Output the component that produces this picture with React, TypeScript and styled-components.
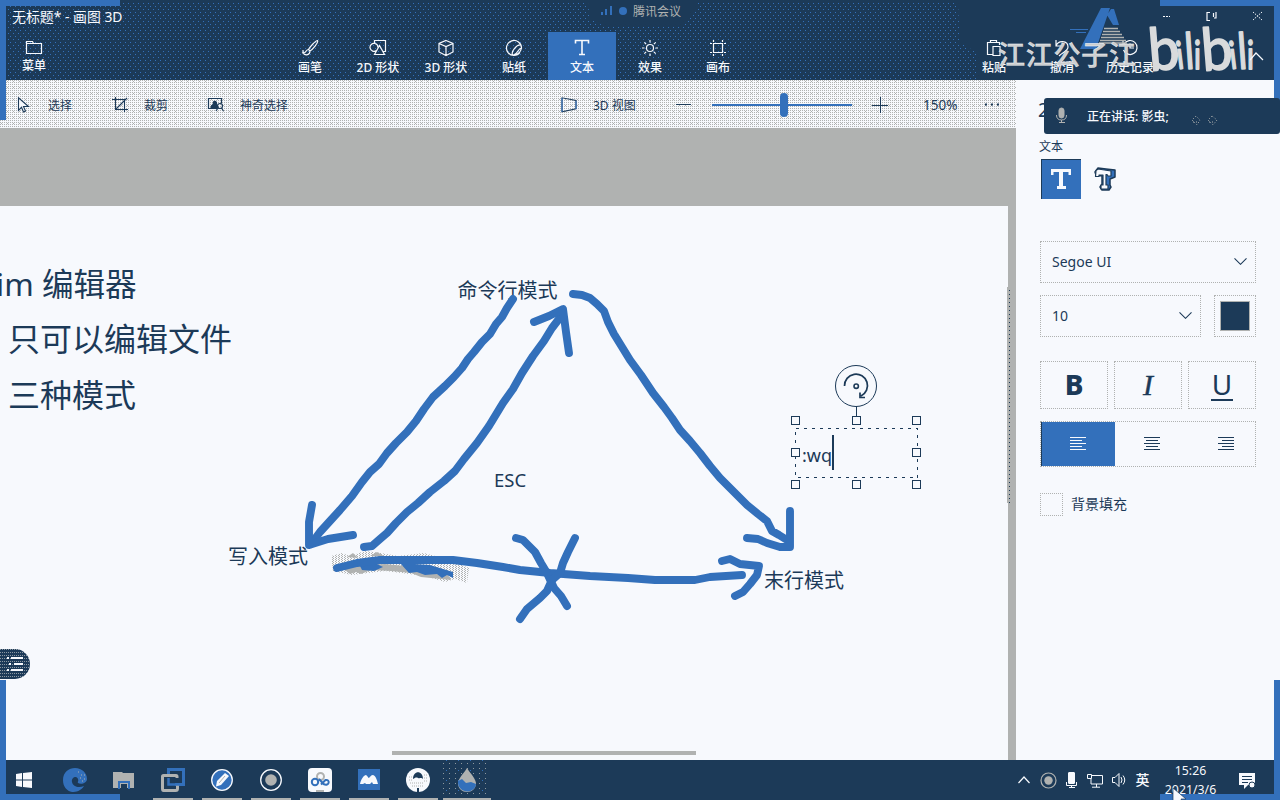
import React from 'react';
import styled, { createGlobalStyle, css } from 'styled-components';

const navy = '#1c3a58';
const blue = '#3370bb';
const gray = '#b0b2b1';
const paper = '#f7f9fd';

const Global = createGlobalStyle`
  * { box-sizing: border-box; }
  body { margin: 0; background: ${paper}; overflow: hidden; }
  svg { display: block; flex: none; }
`;

const Page = styled.div`
  position: relative;
  width: 1280px;
  height: 800px;
  overflow: hidden;
  display: grid;
  grid-template-rows: 80px 680px 40px;
  color: ${navy};
  background: ${paper};
  font-family: 'Noto Sans', 'Noto Sans CJK SC', sans-serif;
  font-size: 12px;
`;

const Header = styled.header`
  position: relative;
  display: grid;
  grid-template-rows: 32px 48px;
  background: ${navy};
  color: ${paper};
`;

const Dots = styled.div`
  position: absolute;
  inset: 3px auto 0 8px;
  width: 970px;
  background:
    conic-gradient(at 1px 1px, transparent 75%, ${blue} 0) 0 0 / 5px 6px,
    conic-gradient(at 1px 1px, transparent 75%, ${blue} 0) 2px 3px / 5px 6px;
  clip-path: polygon(0 0, 580px 0, 582px 16px, 596px 23px, 675px 23px, 686px 10px, 690px 0, 950px 0, 952px 40px, 970px 50px, 970px 100%, 0 100%);
`;

const TitleRow = styled.div`
  position: relative;
  display: flex;
  align-items: center;
  padding: 0 0 0 12px;
  font-size: 13.9px;
`;

const Meeting = styled.div`
  position: absolute;
  left: 601px;
  top: 2px;
  height: 18px;
  display: flex;
  align-items: center;
  gap: 6px;
  color: ${gray};
  font-size: 12px;
`;

const WindowButtons = styled.div`
  margin-left: auto;
  display: flex;
  padding-right: 17px;
  gap: 35px;
`;

const Tabs = styled.div`
  position: relative;
  display: flex;
`;

const Tab = styled.div<{ $active?: boolean; $before?: number; $raise?: number }>`
  width: 68px;
  margin-left: ${(p) => p.$before ?? 0}px;
  padding-top: 7px;
  display: flex;
  flex-direction: column;
  align-items: center;
  gap: ${(p) => 2 - (p.$raise ?? 0)}px;
  line-height: 18px;
  font-weight: 500;
  white-space: nowrap;
  background: ${(p) => (p.$active ? blue : 'transparent')};
`;

const Body = styled.main`
  display: grid;
  grid-template-columns: 1016px 264px;
`;

const Workspace = styled.section`
  display: grid;
  grid-template-rows: 48px 632px;
`;

const Toolbar = styled.div`
  display: flex;
  align-items: center;
  padding-top: 1px;
  background:
    conic-gradient(at 1px 1px, transparent 75%, ${gray} 0) 0 0 / 2px 2px,
    conic-gradient(at 1px 1px, transparent 75%, ${gray} 0) 1px 1px / 6px 6px,
    ${paper};
`;

const Tool = styled.div<{ $w: number }>`
  width: ${(p) => p.$w}px;
  display: flex;
  align-items: center;
  gap: 16px;
`;

const Zoom = styled.span`
  width: 62px;
  font-size: 13.5px;
`;

const Slider = styled.div`
  width: 140px;
  height: 24px;
  margin-right: 20px;
  padding-left: 68px;
  background: linear-gradient(${blue}, ${blue}) 0 11px / 100% 2px no-repeat;
`;

const Thumb = styled.div`
  width: 8px;
  height: 24px;
  border-radius: 4px;
  background: ${blue};
`;

const Canvas = styled.div`
  position: relative;
  overflow: hidden;
  padding: 78px 8px 0 0;
  background: ${gray};
`;

const Paper = styled.div`
  height: 100%;
  background: ${paper};
`;

const Drawing = styled.svg`
  position: absolute;
  left: 0;
  top: 0;
`;

const Note = styled.div<{ $x: number; $y: number; $size: number }>`
  position: absolute;
  left: ${(p) => p.$x}px;
  top: ${(p) => p.$y - 128}px;
  font-size: ${(p) => p.$size}px;
  line-height: 1;
  white-space: pre;
`;

const ScrollThumb = styled.div<{ $vertical?: boolean }>`
  position: absolute;
  background: ${gray};
  ${(p) =>
    p.$vertical
      ? css`
          left: 1007px;
          top: 159px;
          width: 4px;
          height: 216px;
          background: linear-gradient(to right, transparent 2px, ${navy} 2px, ${navy} 3px, transparent 3px), ${gray};
          &::after {
            content: '';
            position: absolute;
            inset: 0;
            background: repeating-linear-gradient(${gray} 0 3px, transparent 3px 4px);
          }
        `
      : css`
          left: 392px;
          top: 623px;
          width: 304px;
          height: 4px;
        `}
`;

const SidePill = styled.div`
  position: absolute;
  left: 0;
  top: 649px;
  width: 30px;
  height: 30px;
  display: grid;
  place-items: center;
  padding-right: 2px;
  border-radius: 0 15px 15px 0;
  background:
    conic-gradient(at 1px 1px, transparent 75%, #8b98a2 0) 0 0 / 2px 3px,
    ${navy};
`;

const Panel = styled.aside`
  position: relative;
  padding: 58px 24px 0 24px;
  background: ${paper};
`;

const PanelTitle = styled.div`
  position: absolute;
  left: 22px;
  top: 18px;
  font-size: 19px;
  line-height: 24px;
`;

const PanelLabel = styled.div`
  height: 21px;
  margin-left: -1px;
  line-height: 18px;
`;

const TypeRow = styled.div`
  display: flex;
  height: 82px;
  gap: 4px;
  padding-left: 1px;
`;

const TypeButton = styled.div<{ $active?: boolean }>`
  width: 40px;
  height: 40px;
  display: grid;
  place-items: center;
  background: ${(p) => (p.$active ? blue : 'transparent')};
  box-shadow: ${(p) => (p.$active ? `inset 1px 1px ${navy}` : 'none')};
`;

const Row = styled.div<{ $gap: number; $after: number }>`
  display: flex;
  gap: ${(p) => p.$gap}px;
  margin-bottom: ${(p) => p.$after}px;
`;

const Box = styled.div<{ $h: number; $w?: number }>`
  flex: ${(p) => (p.$w ? 'none' : 1)};
  width: ${(p) => (p.$w ? `${p.$w}px` : 'auto')};
  height: ${(p) => p.$h}px;
  display: flex;
  align-items: center;
  justify-content: center;
  border: 1px dotted ${gray};
`;

const Select = styled(Box)`
  justify-content: space-between;
  padding: 0 8px 2px 11px;
  font-size: 14px;
`;

const Swatch = styled.div`
  width: 30px;
  height: 30px;
  border: 1px solid ${gray};
  background: ${navy};
`;

const Letter = styled.span<{ $kind: 'b' | 'i' | 'u' }>`
  line-height: 30px;
  font-size: 28px;
  ${(p) => p.$kind === 'b' && css`font-weight: 800; line-height: 26px; padding-bottom: 2px;`}
  ${(p) => p.$kind === 'i' && css`font-family: 'Liberation Serif', serif; font-style: italic; font-size: 30px; -webkit-text-stroke: 0.4px ${navy};`}
  ${(p) => p.$kind === 'u' && css`
    width: 22px;
    height: 30px;
    line-height: 26px;
    border-bottom: 2px solid ${navy};
    display: flex;
    justify-content: center;
    margin-top: 1px;
  `}
`;

const AlignGroup = styled(Box)`
  justify-content: flex-start;
`;

const AlignCell = styled.div<{ $active?: boolean; $last?: boolean }>`
  width: ${(p) => (p.$last ? 66 : 74)}px;
  padding-left: ${(p) => (p.$last ? 8 : 0)}px;
  height: 44px;
  display: grid;
  place-items: center;
  color: ${(p) => (p.$active ? paper : navy)};
  background: ${(p) => (p.$active ? blue : 'transparent')};
  box-shadow: ${(p) => (p.$active ? `inset 1px 0 ${navy}` : 'none')};
`;

const Fill = styled.label`
  display: flex;
  align-items: center;
  gap: 8px;
  font-size: 14px;
  line-height: 24px;
`;

const Toast = styled.div`
  position: absolute;
  left: 1044px;
  top: 98px;
  width: 236px;
  height: 36px;
  display: flex;
  align-items: center;
  padding-left: 12px;
  border-radius: 3px;
  background: ${navy};
  color: ${paper};
  font-weight: 500;
`;

const ToastText = styled.span`
  width: 102px;
  margin-left: 19px;
`;

const Wave = styled.svg`
  margin-top: 9px;
`;

const Taskbar = styled.footer`
  display: flex;
  padding-left: 1px;
  background: ${navy};
  color: ${paper};
`;

const StartButton = styled.div`
  width: 49px;
  height: 40px;
  padding: 12px 0 0 15px;
`;

const TaskButton = styled.div<{ $open?: boolean; $active?: boolean }>`
  width: 49px;
  height: 40px;
  display: flex;
  justify-content: center;
  align-items: center;
  background:
    linear-gradient(${gray}, ${gray}) center bottom / ${(p) => (p.$active ? 48 : p.$open ? 40 : 0)}px 2px no-repeat,
    ${(p) =>
      p.$active
        ? `conic-gradient(at 1px 1px, transparent 75%, #8d989f 0) 1px 3px / 6px 5px, conic-gradient(at 1px 1px, transparent 75%, ${blue} 0) 4px 0 / 12px 10px`
        : 'none'};
`;

const Tray = styled.div`
  margin-left: auto;
  display: flex;
  align-items: center;
`;

const TrayItem = styled.div<{ $w: number }>`
  width: ${(p) => p.$w}px;
  display: flex;
  justify-content: center;
  font-size: 14px;
  line-height: 18px;
  font-weight: 500;
`;

const Clock = styled.div`
  width: 73px;
  height: 40px;
  text-align: center;
  line-height: 19px;
  padding-top: 1px;
  font-size: 12.3px;
`;

const Frame = styled.i<{ $x: number; $y: number; $w: number; $h: number }>`
  position: absolute;
  left: ${(p) => p.$x}px;
  top: ${(p) => p.$y}px;
  width: ${(p) => p.$w}px;
  height: ${(p) => p.$h}px;
  background: ${blue};
`;

const Overlay = styled.svg`
  position: absolute;
  pointer-events: none;
`;

const Ico = ({ s = 18, sw = 1.2, children }: { s?: number; sw?: number; children: React.ReactNode }) => (
  <svg width={s} height={s} viewBox={`0 0 ${s} ${s}`} fill="none" stroke="currentColor" strokeWidth={sw}>
    {children}
  </svg>
);

const tabs: { label: string; active?: boolean; icon: React.ReactNode }[] = [
  { label: '画笔', icon: <path d="M16.5 1.5c-2 0-8 7-9 9l1.500 1.500c2-1 9-8.500 7.500-10.500zM7.500 10.500c-3 0-1.500 3.500-5.500 3.500 2.500 3 7 2 7-2M2 11v3" /> },
  { label: '2D 形状', icon: <><path d="M5.500 4V1.500h11v11h-3M6 4.500a4 4 0 1 0 1.500 7M10.500 6.500 5.500 15.500h10z" /><path d="M6 4.500c2 .5 3 2 3 4" /></> },
  { label: '3D 形状', icon: <path d="m9 1.500 7 3v8.500l-7 3.500-7-3.500V4.500zM2 4.500l7 3 7-3M9 7.500v9" /> },
  { label: '贴纸', icon: <path d="M15 13.500A7.500 7.500 0 1 1 16.500 9c-3.500 0-3 6-8.500 7.400C5 13 12 5 16 6M8 16.500c3 0 8-3 8.500-7.500" /> },
  { label: '文本', active: true, icon: <path d="M2.500 4.500v-3h13v3M9 1.500v14M6 15.500h6" strokeWidth="1.600" /> },
  { label: '效果', icon: <><circle cx="9" cy="9" r="3.500" /><path d="M9 1v2.500M9 14.500V17M1 9h2.500M14.500 9H17M3.300 3.300l1.800 1.800M12.900 12.900l1.800 1.800M3.300 14.700l1.800-1.800M12.900 5.100l1.800-1.800" /></> },
  { label: '画布', icon: <path d="M4.500 4.500h9v9h-9zM4.500 1v2M13.500 1v2M4.500 15v2M13.500 15v2M1 4.500h2M15 4.500h2M1 13.500h2M15 13.500h2" /> },
];

const AlignIcon = ({ x }: { x: number }) => (
  <svg width="16" height="14" stroke="currentColor" strokeWidth="1">
    <path d={`M0 .5h16M${x} 3.500h12M0 6.500h16M${x} 9.500h12M0 12.500h16`} />
  </svg>
);

const Chevron = () => (
  <svg width="13" height="8" fill="none" stroke={navy} strokeWidth="1.100">
    <path d="m.5 1.300 6 6 6-6" />
  </svg>
);

const strokes = [
  'M513 299L507 308L502 317L496 324L490 334L482 342L474 352L468 359L462 368L454 377L445 386L433 397L424 409L416 421L407 432L396 443L387 453L379 464L370 472L362 482L352 496L340 510L330 521L320 532L311 544',
  'M312 505L309 522L309 545L328 539L353 535',
  'M364 547L372 546L380 539L387 533L396 523L407 512L418 503L430 492L444 481L455 471L464 459L477 443L489 426L503 403L513 389L522 373L533 356L544 341L552 328L562 315',
  'M534 322L549 316L563 309L566 332L569 353',
  'M573 294L582 295L590 298L597 304L604 311L608 322L614 334L622 347L630 360L641 375L653 393L664 407L672 418L680 430L690 441L700 453L710 466L720 478L734 492L747 505L758 514L767 521L772 531L779 535L787 540',
  'M790 511L790 547L780 547L767 543L758 539L747 538',
  'M337 568L357 563L380 560L453 560L477 563L503 567L520 570L550 573L590 576L628 578L655 580L695 580L710 577L742 575',
  'M722 561L730 559L740 564L759 566L757 575L750 584L743 592L735 596',
  'M516 538L523 540L535 552L541 563L547 573L554 588L561 596L567 606',
  'M575 538L568 552L563 563L560 573L552 580L547 591L540 598L527 609L520 619',
];

const handles = [
  [795, 420], [856, 420], [916, 420],
  [795, 452], [916, 452],
  [795, 484], [856, 484], [916, 484],
];

export default function App() {
  return (
    <Page>
      <Global />
      <Header>
        <Dots />
        <TitleRow>
          <span>无标题* - 画图 3D</span>
          <Meeting>
            <svg width="12" height="10" fill={blue}><path d="M0 6h2v3H0zM4 3h2v6H4zM9 0h2v9H9z" /></svg>
            <svg width="8" height="8" fill={blue}><circle cx="4" cy="4" r="4" /></svg>
            <span>腾讯会议</span>
          </Meeting>
          <WindowButtons>
            <Ico s={10} sw={1}><path d="M2 5.500h7" strokeDasharray="2 1" /></Ico>
            <Ico s={11} sw={1.200}><path d="M4 1.500H1v8h3M7.500 2v4M10 1v6H8" /></Ico>
            <Ico s={11} sw={1}><path d="m1 1 9 8M10 1 1 9" strokeDasharray="1.500 1.200" /></Ico>
          </WindowButtons>
        </TitleRow>
        <Tabs>
          <Tab $raise={2}>
            <Ico><path d="M1.500 14.500v-12h6l1 2h8v10zM1.500 4.500h7" /></Ico>
            菜单
          </Tab>
          {tabs.map((t, i) => (
            <Tab key={t.label} $active={t.active} $before={i === 0 ? 208 : 0}>
              <Ico>{t.icon}</Ico>
              {t.label}
            </Tab>
          ))}
          <Tab $before={208}>
            <Ico><path d="M5.500 3.500h-3v12H8M5.500 3.500v-2h6v2zM11.500 3.500h3V6M8 7.500h7v9H8z" /></Ico>
            粘贴
          </Tab>
          <Tab>
            <Ico><path d="M3 1v6h6M3 7c2-6 12-6 12 1 0 4-5 5-9 9" /></Ico>
            撤消
          </Tab>
          <Tab>
            <Ico><path d="M3 5a7 7 0 1 1-.5 6M2 1v4.500h5M9 4.500V9h4" /></Ico>
            历史记录
          </Tab>
        </Tabs>
      </Header>

      <Body>
        <Workspace>
          <Toolbar>
            <Tool $w={96}>
              <svg width="32" height="16" fill={paper} stroke={navy} strokeWidth="1.100"><path d="M18.500.8v12.500l3-3 2 4.700 2-1-2-4.500h5z" /></svg>
              选择
            </Tool>
            <Tool $w={96}>
              <svg width="32" height="16" fill="none" stroke={navy} strokeWidth="1.100"><path d="M19.500 0v12.500H32M16 2.500h12.500V15M20 12 31 1" /></svg>
              裁剪
            </Tool>
            <Tool $w={353}>
              <svg width="32" height="16" fill="none" stroke={navy} strokeWidth="1.200">
                <path d="M25 11.500h-8.500v-10h13v5" />
                <path d="M19 10.500c0-3 2-2 2.500-3.500-1.500-3 3.500-4 3 0 0 1.500 1 1 1.500 3.500z" fill={navy} />
                <circle cx="28" cy="9" r="2.500" />
                <path d="m26 11-2 3M29.500 11l2 3" />
              </svg>
              神奇选择
            </Tool>
            <Tool $w={131}>
              <svg width="32" height="16" fill="none" stroke={navy} strokeWidth="1.100"><path d="M17 .8v14l14-3V3.500z" /><path d="M17 1v14M31 4v8" stroke={blue} /></svg>
              3D 视图
            </Tool>
            <Tool $w={36}><svg width="15" height="2" fill={navy}><path d="M0 0h15v1H0z" /></svg></Tool>
            <Slider><Thumb /></Slider>
            <Tool $w={51}><Ico s={16} sw={1}><path d="M0 8.500h16M8.500 0v16" /></Ico></Tool>
            <Zoom>150%</Zoom>
            <svg width="16" height="3" fill={navy}><path d="M0 .5h2v2H0zM6 .5h2v2H6zM12 .5h2v2h-2z" /></svg>
          </Toolbar>
          <Canvas>
            <Paper />
            <Note $x={-4} $y={268} $size={31.6}>im 编辑器</Note>
            <Note $x={8} $y={323} $size={32}>只可以编辑文件</Note>
            <Note $x={8} $y={379} $size={32}>三种模式</Note>
            <Note $x={457.5} $y={281} $size={20}>命令行模式</Note>
            <Note $x={228} $y={547} $size={20}>写入模式</Note>
            <Note $x={764} $y={571} $size={20}>末行模式</Note>
            <Note $x={494} $y={471} $size={18.5}>ESC</Note>
            <Drawing width="1016" height="632" viewBox="0 128 1016 632" fill="none">
              <defs>
                <pattern id="grain" width="3" height="2" patternUnits="userSpaceOnUse">
                  <path d="M0 0h1v1H0zM2 1h1v1H2z" fill={gray} />
                </pattern>
              </defs>
              <path d="M331 556L342 553L350 556L365 551L381 553L398 556L424 553L450 560L469 568L467 583L455 579L445 582L425 576L385 571L352 575L333 571z" fill="url(#grain)" />
              <path d="M347 557l6-4 5 5zM370 556l7-4 7 4zM340 566l10 8 6-2 5 2 10-4 20 1 20 2 10 4 30 3-6-10-60-6z" fill={gray} />
              <path d="M360 566l15-3 8 4-9 4-12-1zM400 563l30 2 23 7v6l-6-3-5 3-5-4-12 1-8-3-8 1z" fill={blue} />
              <g stroke={blue} strokeWidth="7.900" strokeLinecap="round" strokeLinejoin="round">
                {strokes.map((d) => <path key={d} d={d} />)}
              </g>
              <g stroke={navy} shapeRendering="crispEdges">
                <rect x="795.500" y="428.500" width="122" height="49" strokeDasharray="3 5" />
                <path d="M856.500 406v12" />
                {handles.map(([x, y]) => <rect key={`${x}-${y}`} x={x - 3.500} y={y - 3.500} width="8" height="8" fill={paper} />)}
              </g>
              <g stroke={navy}>
                <circle cx="856" cy="386" r="20.500" />
                <path d="M844.500 386a11.500 11.500 0 1 1 16.500 10M860 392.500v5h5" strokeWidth="1.700" />
                <circle cx="856.200" cy="386.200" r="2.200" strokeWidth="1.600" />
              </g>
              <path d="M832 435h2v35h-2z" fill={navy} />
            </Drawing>
            <Note $x={802} $y={446} $size={18}>:wq</Note>
            <ScrollThumb $vertical />
            <ScrollThumb />
          </Canvas>
        </Workspace>

        <Panel>
          <PanelTitle>2D</PanelTitle>
          <PanelLabel>文本</PanelLabel>
          <TypeRow>
            <TypeButton $active>
              <svg width="22" height="22" fill={paper}><path d="M1 1h20v6h-2.500V4H13v14h3v3H7v-3h2V4H3.500v3H1z" /></svg>
            </TypeButton>
            <TypeButton>
              <svg width="22" height="24" viewBox="0 0 22 24" strokeLinejoin="round" strokeWidth="1.500" stroke={navy}>
                <path d="M4 1 12 2l9 1v7l-5 2v6l1 2-2 3H8l-2-3 2-3V9L2 8 1 5z" fill={blue} />
                <path d="M2 3.500 4 2l13 2v5h-3l-1-1.500h-1V18h2v4H7v-4h2V8H5v1.500H1.500z" fill={paper} strokeWidth="1.200" />
              </svg>
            </TypeButton>
          </TypeRow>
          <Row $gap={0} $after={12}>
            <Select $h={42}>Segoe UI<Chevron /></Select>
          </Row>
          <Row $gap={13} $after={24}>
            <Select $h={42} $w={161}>10<Chevron /></Select>
            <Box $h={42}><Swatch /></Box>
          </Row>
          <Row $gap={6} $after={12}>
            <Box $h={48}><Letter $kind="b">B</Letter></Box>
            <Box $h={48}><Letter $kind="i">I</Letter></Box>
            <Box $h={48}><Letter $kind="u">U</Letter></Box>
          </Row>
          <Row $gap={0} $after={25}>
            <AlignGroup $h={46}>
              <AlignCell $active><AlignIcon x={0} /></AlignCell>
              <AlignCell><AlignIcon x={2} /></AlignCell>
              <AlignCell $last><AlignIcon x={4} /></AlignCell>
            </AlignGroup>
          </Row>
          <Fill><Box $h={23} $w={23} />背景填充</Fill>
        </Panel>
      </Body>

      <Taskbar>
        <StartButton><svg width="16" height="16" fill={paper}><path d="M0 2l6-1v6.500H0zM7 1l9-1v7.500H7zM0 8.500h6V15l-6-1zM7 8.500h9V16l-9-1z" /></svg></StartButton>
        <TaskButton>
          <svg width="24" height="24"><path d="M0 12C0 4 6 0 12 0c7 0 12 5 12 11 0 4-6 6-9 4-1-1 1-2 0-4-2-4-7-1-6 3 1 5 7 6 12 4-3 5-8 6-12 6C4 23 0 19 0 12z" fill={blue} /><path d="M15 4h1m2 3h1m2 0h1m-5 3h1m3 1h1M19 13h1" stroke={gray} /></svg>
        </TaskButton>
        <TaskButton><svg width="22" height="19"><path d="M0 1h9l1 1h11v15H0z" fill={gray} /><path d="M6 18v-7h10v7" fill="none" stroke={blue} strokeWidth="2" /><path d="M8 13h6v6H8z" fill={navy} /></svg></TaskButton>
        <TaskButton $open><svg width="24" height="24" fill="none" strokeWidth="3"><path d="M7.500 6V1.500h15v15H14" stroke={blue} /><path d="M16 10V8.500q0-1-1-1H2.500q-1 0-1 1v12q0 2 1 2h12q2 0 2-2V17" stroke={gray} /><path d="M7.500 10v6.500H18" stroke={blue} strokeWidth="2.500" /></svg></TaskButton>
        <TaskButton $open><svg width="22" height="22"><circle cx="11" cy="11" r="10.300" fill={blue} stroke={paper} strokeWidth="1.300" /><path d="M5 17.500 6 12l8-8 4 3-8 9z" fill={paper} /><path d="M8 14l6-7" stroke={gray} /></svg></TaskButton>
        <TaskButton $open><svg width="22" height="22"><circle cx="11" cy="11" r="10.300" fill="none" stroke={paper} strokeWidth="1.300" /><circle cx="11" cy="11" r="5.800" fill={gray} /></svg></TaskButton>
        <TaskButton $open><svg width="24" height="24" fill="none" strokeWidth="2"><rect width="24" height="24" rx="4" fill={paper} /><circle cx="12.500" cy="8.500" r="3.500" stroke={gray} /><circle cx="7" cy="14" r="3.200" stroke={blue} /><path d="m11 11 4.500 5c6 3 7-5 2-4L13 16.500" stroke={blue} /><path d="M8 23h8" stroke={gray} /></svg></TaskButton>
        <TaskButton $open><svg width="22" height="22"><rect width="22" height="21" fill={blue} /><path d="M2 15c1-5 4-9 6-9 2 1 2 3 3 3 1-1 2-3 4-3 3 1 4 5 5 9h-5l-1-2-2 2H8l-1-1-2 1z" fill={paper} /></svg></TaskButton>
        <TaskButton $open><svg width="24" height="24"><circle cx="12" cy="12" r="12" fill={paper} /><path d="M7 11c0-9 10-9 10 0-2-2-3 0-5-1-2-1-3 0-5 1zM11 20h2v4h-2z" fill={navy} /><path d="M3 9h4M3 12h4M4 15h14M18 7h4M18 10h4M18 13h4M6 18h12" stroke={gray} strokeDasharray="1 1" /></svg></TaskButton>
        <TaskButton $open $active><svg width="20" height="24"><path d="M10 0c2 4 8 9 9 15 0 12-18 12-18 0C2 9 8 4 10 0z" fill={gray} /><path d="M1 13l4-2 4 4 5-1 5 2c-1 10-17 10-18-1z" fill={blue} /></svg></TaskButton>
        <Tray>
          <TrayItem $w={24}><Ico s={12}><path d="m.5 9 5.500-6 5.500 6" /></Ico></TrayItem>
          <TrayItem $w={24}><svg width="17" height="17"><circle cx="8.500" cy="8.500" r="7.500" fill="none" stroke={gray} strokeWidth="1.200" /><circle cx="8.500" cy="8.500" r="4.200" fill={gray} /></svg></TrayItem>
          <TrayItem $w={23}><svg width="12" height="18" fill="none" stroke={paper}><rect x="2.500" y="1.500" width="6" height="11" rx=".5" fill={paper} /><path d="M.5 11v3.500h10V11M5.500 14v2.500M3 16.500h6" /></svg></TrayItem>
          <TrayItem $w={24}><svg width="17" height="15" fill="none" stroke={paper}><path d="M5 2.500h10.500v8.500H4V6M.5 1.500h4v4h-4zM9.500 11v3M5 14.200h8" /></svg></TrayItem>
          <TrayItem $w={24}><Ico s={16} sw={1}><path d="M1.500 5.500H4l4-4v13l-4-4H1.500zM10 5q2 3 0 6M12 3.500q3.500 4.500 0 9" /></Ico></TrayItem>
          <TrayItem $w={23}>英</TrayItem>
          <Clock>15:26<br />2021/3/6</Clock>
          <TrayItem $w={39}><svg width="16" height="17"><path d="M0 1h16v12H9l-4 4v-4H0z" fill={paper} /><path d="M3 4.500h10M3 7.500h10M3 10.500h6" stroke={navy} /><circle cx="13" cy="13" r="3" fill={paper} stroke={navy} /></svg></TrayItem>
          <TrayItem $w={14} />
        </Tray>
      </Taskbar>

      <SidePill>
        <svg width="18" height="16" fill={paper}><path d="M2 1h2v2H2zM6 1h12v2H6zM4 7h2v2H4zM9 7h9v2H9zM2 13h2v2H2zM6 13h12v2H6z" /></svg>
      </SidePill>

      <Frame $x={0} $y={0} $w={120} $h={6} />
      <Frame $x={0} $y={0} $w={6} $h={120} />
      <Frame $x={1160} $y={0} $w={120} $h={6} />
      <Frame $x={1274} $y={0} $w={6} $h={120} />
      <Frame $x={0} $y={680} $w={6} $h={120} />
      <Frame $x={0} $y={794} $w={120} $h={6} />
      <Frame $x={1274} $y={680} $w={6} $h={120} />
      <Frame $x={1160} $y={794} $w={120} $h={6} />

      <Toast>
        <svg width="12" height="18" fill="none" stroke={gray}><rect x="3" y="1" width="5" height="10" rx="2.500" fill={gray} /><path d="M.5 8q0 5 5 5t5-5M5.500 13v3M3 15.500h6" /></svg>
        <ToastText>正在讲话: 影虫;</ToastText>
        <Wave width="30" height="12" fill="none" stroke={gray} strokeDasharray="1 2"><path d="M7 1 3 5l5 5 3-5zM23 1l-4 4 5 5 4-5zM4 7h5M20 7h5" /></Wave>
      </Toast>

      <Overlay width="1280" height="80" viewBox="0 0 1280 80">
        <path d="M1101 8h9l-14 41h-16zM1111 9l3 0 5 16h-6l-6-10z" fill={blue} />
        <path d="M1104 28.500h14M1103 31.500h17M1102 34.500h20M1101 37.500h23M1100 40.500h26M1099 43h28" stroke={gray} strokeWidth="1.300" />
        <path d="M1070 29.500h18M1076 32.500h10" stroke={blue} />
        <text x="998" y="65" fontSize="27" fontWeight="500" fill="#cccecf" stroke={paper} strokeWidth=".4" textLength="138">江江公子江</text>
        <g fill="#d9dbdc" stroke="#d9dbdc" strokeWidth="1.800" strokeLinejoin="round" fontFamily="Lato, sans-serif" fontWeight="400">
          <g transform="translate(1150 71) scale(.92 .98) rotate(-5)"><text fontSize="60">b</text></g>
          <g transform="translate(1178 69) rotate(-7) scale(.75 1)"><text fontSize="38">i</text></g>
          <g transform="translate(1186 69) rotate(-4) scale(.75 1)"><text fontSize="50">l</text></g>
          <g transform="translate(1194 69) scale(.75 1)"><text fontSize="38">i</text></g>
          <g transform="translate(1203 71) scale(.92 .98) rotate(-5)"><text fontSize="60">b</text></g>
          <g transform="translate(1231 69) rotate(-7) scale(.75 1)"><text fontSize="38">i</text></g>
          <g transform="translate(1239 69) rotate(-4) scale(.75 1)"><text fontSize="50">l</text></g>
          <g transform="translate(1247 69) scale(.75 1)"><text fontSize="38">i</text></g>
        </g>
        <path d="m1250 60 6-7 7 7" fill="none" stroke={paper} strokeWidth="1.200" />
      </Overlay>
      <Overlay width="1280" height="800" viewBox="0 0 1280 800">
        <path d="M1173 788v16l4-3 3 4 3-1-2-5h5z" fill={paper} stroke={navy} strokeWidth=".7" />
      </Overlay>
    </Page>
  );
}
